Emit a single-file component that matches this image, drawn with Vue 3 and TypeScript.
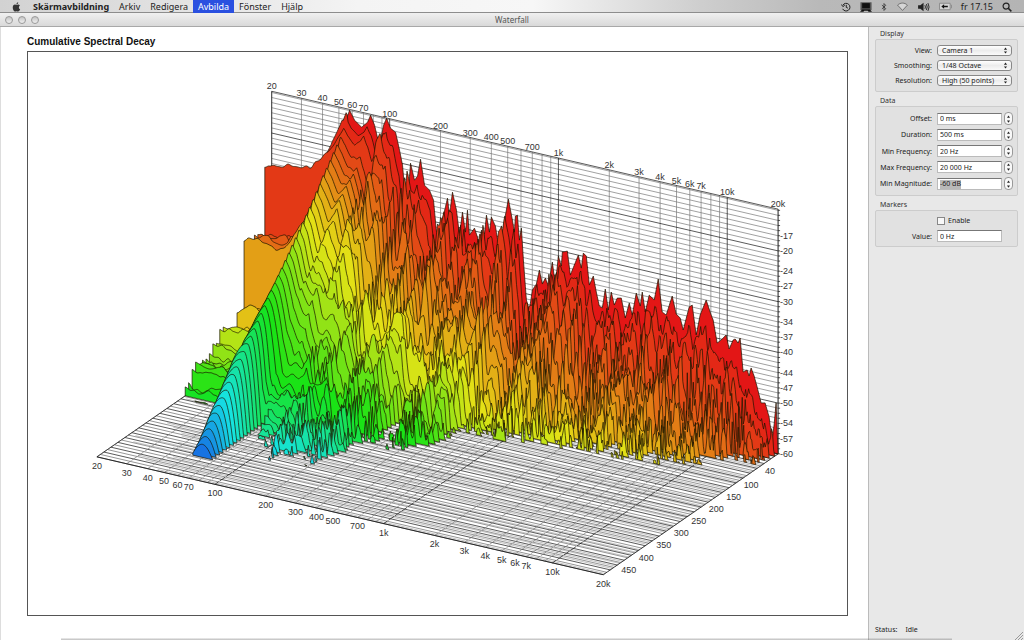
<script setup lang="ts">
import { ref } from 'vue'

type Point = [number, number]

const menus = ['Arkiv', 'Redigera', 'Avbilda', 'Fönster', 'Hjälp']
const activeMenu = ref('Avbilda')

const selects = [
  { id: 'view', label: 'View:', value: 'Camera 1', options: ['Camera 1', 'Camera 2'] },
  { id: 'smoothing', label: 'Smoothing:', value: '1/48 Octave', options: ['1/48 Octave', '1/24 Octave'] },
  { id: 'resolution', label: 'Resolution:', value: 'High (50 points)', options: ['High (50 points)', 'Low (20 points)'] },
]
const fields = ref([
  { id: 'offset', label: 'Offset:', value: '0 ms', marked: false },
  { id: 'duration', label: 'Duration:', value: '500 ms', marked: false },
  { id: 'minf', label: 'Min Frequency:', value: '20 Hz', marked: false },
  { id: 'maxf', label: 'Max Frequency:', value: '20 000 Hz', marked: false },
  { id: 'minm', label: 'Min Magnitude:', value: '-60 dB', marked: true },
])
const markerValue = ref('0 Hz')
const markersOn = ref(false)

function step(index: number, by: number) {
  const f = fields.value[index]
  const m = f.value.replace(/ (?=\d)/g, '').match(/^(-?\d+) (.*)$/)
  if (m) f.value = `${Number(m[1]) + by} ${m[2]}`
}

/* ---- projection: f and t run 0..1, h is height above the floor ---- */
const px = (f: number, t: number) => 272 + 507 * f - 175 * t
const py = (f: number, t: number) => 336 + 118 * f + 121 * t
const DB = 5.08
const TOP = 245
const fOf = (hz: number) => Math.log10(hz / 20) / 3
const clamp = (v: number) => Math.min(1, Math.max(0, v))

function lerpTable(table: Point[], x: number): number {
  if (x <= table[0][0]) return table[0][1]
  for (let i = 1; i < table.length; i++) {
    if (x <= table[i][0]) {
      const [x0, y0] = table[i - 1]
      const [x1, y1] = table[i]
      return y0 + ((y1 - y0) * (x - x0)) / (x1 - x0)
    }
  }
  return table[table.length - 1][1]
}

/* top edge of the spectrum at t = 0 */
const spectrum: Point[] = [
  [272, 182], [300, 180], [325, 165], [331, 150], [335, 142], [341, 122], [344, 112], [347, 118], [350, 110], [355, 120], [362, 127],
  [368, 122], [371, 115], [375, 125], [379, 142], [381, 140], [384, 125], [387, 118], [391, 128], [396, 132],
  [400, 150], [403, 165], [406, 200], [408, 202], [411, 163], [415, 180], [418, 176], [421, 159], [425, 185],
  [430, 190], [434, 200], [437, 232], [440, 235], [444, 215], [448, 198], [450, 215], [453, 192], [457, 210],
  [460, 235], [463, 212], [466, 232], [468, 210], [470, 235], [475, 228], [480, 243], [482, 230], [484, 244],
  [487, 215], [490, 232], [492, 217], [496, 226], [499, 245], [503, 235], [506, 215], [509, 199], [513, 220],
  [515, 232], [516, 216], [518, 215], [520, 240], [522, 228], [524, 260], [527, 300], [530, 310], [533, 290],
  [537, 284], [540, 270], [543, 284], [546, 278], [549, 286], [553, 262], [556, 285], [559, 256], [562, 266],
  [563, 252], [568, 251], [571, 275], [575, 265], [579, 255], [582, 268], [584, 253], [587, 256], [590, 285],
  [594, 276], [597, 292], [600, 306], [603, 308], [606, 289], [609, 310], [612, 292], [615, 305], [618, 298],
  [622, 298], [626, 318], [630, 303], [633, 315], [637, 293], [641, 306], [643, 292], [646, 312], [650, 295],
  [655, 300], [659, 279], [663, 312], [667, 315], [673, 296], [677, 314], [681, 318], [684, 330], [690, 307],
  [693, 305], [697, 335], [701, 315], [707, 300], [712, 315], [714, 320], [718, 343], [722, 340], [727, 335],
  [730, 349], [734, 340], [736, 339], [739, 343], [741, 338], [744, 372], [748, 370], [750, 376], [752, 368],
  [755, 376], [758, 387], [762, 403], [766, 403], [770, 417], [773, 440], [775, 425], [777, 403], [779, 455],
]
/* time at which each frequency band falls through the floor */
const decay: Point[] = [
  [0, 0.9], [0.157, 0.9], [0.165, 0.85], [0.18, 0.64], [0.2, 0.67], [0.234, 0.7], [0.267, 0.73], [0.3, 0.66],
  [0.335, 0.71], [0.36, 0.58], [0.39, 0.44], [0.43, 0.52], [0.46, 0.46], [0.5, 0.3], [0.54, 0.3], [0.57, 0.34],
  [0.6, 0.29], [0.643, 0.25], [0.718, 0.26], [0.803, 0.24], [0.896, 0.17], [0.95, 0.11], [1, 0.05],
]
/* height along the 20 Hz edge over time */
const lowEdge: Point[] = [
  [0, 150], [0.02, 160], [0.04, 178], [0.05, 150], [0.06, 108], [0.098, 117], [0.11, 100], [0.14, 100], [0.157, 124],
  [0.165, 70], [0.176, 50], [0.196, 55], [0.216, 36], [0.25, 30], [0.274, 44], [0.294, 48], [0.31, 30], [0.333, 34],
  [0.35, 22], [0.39, 20], [0.431, 24], [0.451, 27], [0.46, 12], [0.5, 6], [0.515, -10], [0.6, -60], [1, -90],
]

function hash(i: number, j: number): number {
  const s = Math.sin(i * 127.1 + j * 311.7) * 43758.5453
  return s - Math.floor(s)
}
function noise(u: number, v: number): number {
  const i = Math.floor(u)
  const j = Math.floor(v)
  const a = u - i
  const b = v - j
  const sa = a * a * (3 - 2 * a)
  const sb = b * b * (3 - 2 * b)
  const n0 = hash(i, j) + (hash(i + 1, j) - hash(i, j)) * sa
  const n1 = hash(i, j + 1) + (hash(i + 1, j + 1) - hash(i, j + 1)) * sa
  return (n0 + (n1 - n0) * sb) * 2 - 1
}

/* rounded bass resonance that narrows as it dies away */
function dome(f: number, t: number): number {
  const spread = f < 0.157 ? 0.14 * Math.max(0, 0.86 - t) : 0.3 * Math.max(0, 0.52 - t)
  const d = (f - 0.157) / (0.02 + spread)
  return 243 * Math.max(0, 1 - t / 0.9) * (1 - d * d)
}

function height(f: number, t: number): number {
  const x = 272 + 507 * f
  const h0 = py(f, 0) - lerpTable(spectrum, x)
  const late = clamp((t - 0.3) / 0.3)
  if (f < 0.157) {
    const ridge = 243 * (1 - t / 0.9)
    const edge = lerpTable(lowEdge, t)
    const s = Math.pow(clamp((f - 0.055) / 0.102), 2)
    const wob = (noise(f * 40, t * 40) * 5 + noise(f * 110, t * 50) * 3) * (1 - s)
    const base = edge + (ridge - edge) * s
    if (t < 0.02) return Math.min(h0, base + 14)
    const body = base * (1 - late) + dome(f, t) * late * (f > 0.09 || t > 0.55 ? 1 : clamp((f - 0.06) / 0.03))
    return Math.max(edge, body) + wob
  }
  const bend = 1 + 0.75 * clamp((f - 0.19) / 0.08) - 0.25 * clamp((f - 0.34) / 0.1)
  const fall = 1 - t / lerpTable(decay, f)
  const drop = fall > 0 ? Math.pow(fall, bend) : fall
  const u = 507 * f * (0.05 + 0.17 * f)
  const rough = clamp((f - 0.165) / 0.05) * clamp(t / 0.06)
  const peaks = 1 - 2.4 * Math.pow(Math.abs(noise(u, t * 14)), 0.85)
  const n = peaks * 0.85 + noise(u * 1.9 + 40, t * 20) * 0.4 - 0.1
  const amp = (f < 0.25 ? 20 : 27) * rough * (fall > 0 ? 1 : 0.8)
  const smooth = 238 - 45 * clamp((f - 0.16) / 0.1) - 48 * clamp((f - 0.24) / 0.12) - 55 * clamp((f - 0.36) / 0.4)
  const blend = Math.min(0.5, t * 4) * (f < 0.24 ? 0.4 : 1) * (f > 0.85 ? Math.max(0, (1 - f) / 0.15) : 1)
  let h = (h0 * (1 - blend) + smooth * blend) * drop + n * amp
  if (f < 0.26 && t > 0.3) {
    const w = clamp((0.26 - f) / 0.05) * late
    const rest = t < 0.56 ? h * 0.55 : f < 0.19 ? -9 : h * 0.7 - 6
    h = h * (1 - w) + Math.max(dome(f, t), rest) * w
  }
  return h
}

const COUNT = 50
const DIED = 0.86
const slices = Array.from({ length: Math.floor(COUNT * DIED) + 1 }, (_, k) => {
  const t = (k / COUNT) * 0.99
  let d = ''
  let run: string[] = []
  let start = 0
  const close = (f: number) => {
    if (run.length > 1) {
      d += `M${px(start, t).toFixed(1)} ${py(start, t).toFixed(1)}L${run.join('L')}L${px(f, t).toFixed(1)} ${py(f, t).toFixed(1)}Z`
    }
    run = []
  }
  for (let i = 0; i <= 507; i++) {
    const f = i / 507
    const h = height(f, t)
    if (h > 0) {
      if (!run.length) start = f
      run.push(`${px(f, t).toFixed(1)} ${(py(f, t) - h).toFixed(1)}`)
    } else close(f)
  }
  close(1)
  return { d, fill: `hsl(${Math.round(t * 250)}, 82%, 49%)` }
})

const line = (x1: number, y1: number, x2: number, y2: number) =>
  `M${x1.toFixed(1)} ${y1.toFixed(1)}L${x2.toFixed(1)} ${y2.toFixed(1)}`

const freqs: number[] = []
for (const d of [10, 100, 1000, 10000]) {
  for (let m = 1; m < 10; m++) {
    const hz = d * m
    if (hz >= 20 && hz <= 20000) freqs.push(hz)
  }
}
const isDecade = (hz: number) => [100, 1000, 10000].includes(hz)
const wallLine = (hz: number) => {
  const f = fOf(hz)
  return line(px(f, 0), py(f, 0), px(f, 0), py(f, 0) - TOP)
}
const floorLine = (hz: number) => {
  const f = fOf(hz)
  return line(px(f, 0), py(f, 0), px(f, 1), py(f, 1))
}
const minorFreq = freqs.filter((h) => !isDecade(h))
const majorFreq = freqs.filter(isDecade)
const wallMinor = minorFreq.map(wallLine).join('')
const wallMajor = majorFreq.map(wallLine).join('')
const floorMinor = minorFreq.map(floorLine).join('')
const floorMajor = majorFreq.map(floorLine).join('')

let dbMinor = ''
let dbMajor = ''
let ticks = ''
for (let db = 0; db <= 48; db++) {
  const y = db * DB
  const seg = line(272, 336 - y, 779, 454 - y)
  if (db % 10 === 0) dbMajor += seg
  else dbMinor += seg
  ticks += line(779, 454 - y, 781, 454 - y)
}
let timeThin = ''
let timeBold = ''
let timeGrey = ''
for (let k = 0; k <= 50; k++) {
  const t = k / 50
  const seg = line(px(0, t), py(0, t), px(1, t), py(1, t))
  if (k % 2 === 0) timeBold += seg
  else timeThin += seg
  if (k < 50 && k % 5 !== 3) {
    const g = t + 0.006 + 0.008 * hash(k, 9)
    const f0 = 0.12 * hash(k, 4)
    timeGrey += line(px(f0, g), py(f0, g), px(1, g), py(1, g))
  }
}
const outline = `M97 457L272 336V91L779 209V454L604 575Z`

const labelled = [20, 30, 40, 50, 60, 70, 100, 200, 300, 400, 500, 700, 1000, 2000, 3000, 4000, 5000, 6000, 7000, 10000, 20000]
const freqLabels = labelled.map((hz) => ({
  text: hz >= 1000 ? `${hz / 1000}k` : `${hz}`,
  x: px(fOf(hz), 0),
  top: py(fOf(hz), 0) - TOP - 2,
  bx: px(fOf(hz), 1),
  by: py(fOf(hz), 1) + 12,
}))
const dbLabels = [17, 20, 24, 27, 30, 34, 37, 40, 44, 47, 50, 54, 57, 60].map((v) => ({
  text: `-${v}`,
  y: 457 - (60 - v) * DB,
}))
const timeLabels = [40, 100, 150, 200, 250, 300, 350, 400, 450].map((ms) => ({
  text: `${ms}`,
  x: (ms < 100 ? 785 : 787) - 175 * (ms / 500),
  y: 464 + 121 * (ms / 500),
}))
</script>

<template>
  <div class="desktop">
    <header class="menubar">
      <svg class="apple" viewBox="0 0 10 12" aria-hidden="true">
        <path d="M7 .3C5.700.5 4.900 1.500 5 2.700 6.300 2.700 7.100 1.500 7 .3ZM5.100 3.400C4.500 3.400 4 3 3.200 3 1.600 3 .5 4.400.5 6.500.5 8.900 1.900 11.500 3.200 11.500 3.900 11.500 4.300 11.100 5.100 11.100S6.300 11.500 6.900 11.500C8 11.500 9 9.900 9.400 8.700 8.300 8.200 7.800 7.300 7.900 6.200 7.900 5.300 8.400 4.600 9.100 4.100 8.600 3.400 7.800 3 7 3 6.200 3 5.700 3.400 5.100 3.400Z" />
      </svg>
      <nav class="menus">
        <button class="menu app">Skärmavbildning</button>
        <button
          v-for="m in menus"
          :key="m"
          class="menu"
          :class="{ active: m === activeMenu }"
          @click="activeMenu = m"
        >{{ m }}</button>
      </nav>
      <div class="extras">
        <svg class="i10" viewBox="0 0 12 12" aria-hidden="true">
          <path d="M2.200 3.800A4.600 4.600 0 1 1 2 8.200M.5 3L2.300 5.600 4.600 3.700M6.300 3.400V6.400L8.300 7.400" fill="none" stroke="#222" stroke-width="1.200" />
        </svg>
        <svg class="i12" viewBox="0 0 14 11" aria-hidden="true">
          <path d="M.5 0H13.500V9H.5Z" fill="#555" /><path d="M2.500 1H11.500V7H2.500Z" fill="#111" /><path d="M0 11L2.500 8.500H11.500L14 11H10L9 10H5L4 11Z" fill="#111" />
        </svg>
        <svg class="i6" viewBox="0 0 8 12" aria-hidden="true">
          <path d="M1.200 3.400L6.300 8.200 4 10.600V1.400L6.300 3.800 1.200 8.600" fill="none" stroke="#333" stroke-width="1.100" />
        </svg>
        <svg class="i13" viewBox="0 0 14 11" aria-hidden="true">
          <path d="M1 3.800C4.500.5 9.500.5 13 3.800L7 10.300Z" fill="#d6d6d6" stroke="#555" stroke-width=".9" />
        </svg>
        <svg class="i12" viewBox="0 0 13 11" aria-hidden="true">
          <path d="M0 3.700H2.500L6 .8V10.200L2.500 7.300H0Z" fill="#222" />
          <path d="M7.500 3.500Q8.700 5.500 7.500 7.500M9.100 2.300Q11 5.500 9.100 8.700M10.800 1.200Q13.400 5.500 10.800 9.800" fill="none" stroke="#222" />
        </svg>
        <svg class="i13" viewBox="0 0 14 9" aria-hidden="true">
          <path d="M.5 1H12V8H.5ZM12.500 3H13.500V6H12.500" fill="#d4d4d4" stroke="#888" /><path d="M2.500 4.500L5.500 2.200V3.700H9.500V5.300H5.500V6.800Z" fill="#111" />
        </svg>
        <span class="clock">fr 17.15</span>
        <svg class="i10" viewBox="0 0 11 11" aria-hidden="true">
          <circle cx="4.500" cy="4.500" r="3.300" fill="none" stroke="#222" stroke-width="1.300" /><path d="M7 7L10.300 10.300" stroke="#222" stroke-width="1.600" />
        </svg>
      </div>
    </header>

    <div class="titlebar">
      <div class="lights">
        <button class="light" aria-label="Close"></button>
        <button class="light" aria-label="Minimize"></button>
        <button class="light" aria-label="Zoom"></button>
      </div>
      <span class="title">Waterfall</span>
    </div>

    <div class="window">
      <main class="main">
        <h1 class="heading">Cumulative Spectral Decay</h1>
        <div class="frame">
          <svg class="plot" viewBox="28 52 820 563" role="img" aria-label="Cumulative spectral decay plot">
            <path class="ln grey" :d="dbMinor" />
            <path class="ln grey" :d="wallMinor" />
            <path class="ln dark" :d="dbMajor" />
            <path class="ln dark" :d="wallMajor" />
            <path class="ln pale" :d="timeGrey" />
            <path class="ln mid" :d="timeThin" />
            <path class="ln dark" :d="timeBold" />
            <path class="ln grey dashed" :d="floorMinor" />
            <path class="ln dark dashed" :d="floorMajor" />
            <path class="ln dark" :d="outline" />
            <path class="ln dark" :d="ticks" />
            <path v-for="(s, i) in slices" :key="i" class="slice" :d="s.d" :fill="s.fill" />
            <g class="lbl">
              <text v-for="l in freqLabels" :key="'t' + l.text" :x="l.x" :y="l.top" text-anchor="middle">{{ l.text }}</text>
              <text v-for="l in freqLabels" :key="'b' + l.text" :x="l.bx" :y="l.by" text-anchor="middle">{{ l.text }}</text>
              <text v-for="l in dbLabels" :key="l.text" x="781" :y="l.y">{{ l.text }}</text>
              <text v-for="l in timeLabels" :key="'m' + l.text" :x="l.x" :y="l.y" text-anchor="middle">{{ l.text }}</text>
            </g>
          </svg>
        </div>
      </main>

      <aside class="side">
        <section class="group">
          <h2 class="gtitle">Display</h2>
          <div class="box display">
            <div v-for="s in selects" :key="s.id" class="row">
              <label :for="s.id">{{ s.label }}</label>
              <span class="pop">
                <select :id="s.id">
                  <option v-for="o in s.options" :key="o" :selected="o === s.value">{{ o }}</option>
                </select>
                <svg class="arrows" viewBox="0 0 5 8" aria-hidden="true"><path d="M2.500.5L4.300 3H.7ZM2.500 7.500L.7 5H4.300Z" /></svg>
              </span>
            </div>
          </div>
        </section>

        <section class="group">
          <h2 class="gtitle">Data</h2>
          <div class="box data">
            <div v-for="(f, i) in fields" :key="f.id" class="row">
              <label :for="f.id">{{ f.label }}</label>
              <span class="edit">
                <span class="cell">
                  <span v-if="f.marked" class="mark" aria-hidden="true">{{ f.value }}</span>
                  <input :id="f.id" v-model="f.value" type="text" />
                </span>
                <span class="stepper">
                  <button :aria-label="f.label + ' up'" @click="step(i, 1)"><svg viewBox="0 0 4 3"><path d="M2 0L4 3H0Z" /></svg></button>
                  <button :aria-label="f.label + ' down'" @click="step(i, -1)"><svg viewBox="0 0 4 3"><path d="M2 3L4 0H0Z" /></svg></button>
                </span>
              </span>
            </div>
          </div>
        </section>

        <section class="group">
          <h2 class="gtitle">Markers</h2>
          <div class="box markers">
            <div class="row">
              <span></span>
              <label class="check"><input v-model="markersOn" type="checkbox" />Enable</label>
            </div>
            <div class="row">
              <label for="mv">Value:</label>
              <span class="edit"><span class="cell"><input id="mv" v-model="markerValue" type="text" /></span><span class="gap"></span></span>
            </div>
          </div>
        </section>

        <footer class="status">
          <span>Status:</span><span>Idle</span>
          <svg class="grip" viewBox="0 0 8 8" aria-hidden="true"><path d="M0 8L8 0M3 8L8 3M6 8L8 6" stroke="#999" fill="none" /></svg>
        </footer>
      </aside>
    </div>
    <div class="dockshade"></div>
  </div>
</template>

<style>
html,
body {
  margin: 0;
  overflow: hidden;
}
</style>

<style scoped>
* {
  box-sizing: border-box;
}
.desktop {
  display: flex;
  flex-direction: column;
  height: 100vh;
  position: relative;
  background: #fff;
  color: #222;
  font-family: 'Noto Sans', 'Open Sans', sans-serif;
  font-size: 7px;
}
button,
input,
select {
  font: inherit;
  color: inherit;
  margin: 0;
  padding: 0;
  border: 0;
  background: none;
  appearance: none;
  outline: none;
}
svg {
  display: block;
}
.menubar {
  flex: none;
  display: flex;
  align-items: center;
  height: 13px;
  padding: 0 12px;
  font-size: 9px;
  background: linear-gradient(90deg, #d2d2d2 0, #e3e3e3 18%, #f4f4f4 35%, #f7f7f7 52%, #cfcfcf 68%, #b9b9b9 80%, #b4b4b4 100%);
  box-shadow: inset 0 -1px #8d8d8d;
}
.apple {
  width: 9px;
  height: 10px;
  fill: #333;
}
.menus {
  display: flex;
  flex: 1;
  height: 13px;
  margin-left: 7px;
}
.menu {
  height: 13px;
  padding: 0 5px;
  line-height: 12px;
}
.menu.app {
  font-weight: 700;
}
.menu.active {
  color: #fff;
  background: #2a50e0;
}
.extras {
  display: flex;
  align-items: center;
  gap: 9px;
}
.clock {
  font-size: 9px;
  line-height: 12px;
}
.i6 {
  width: 6px;
  height: 10px;
}
.i10 {
  width: 10px;
  height: 10px;
}
.i12 {
  width: 12px;
  height: 10px;
}
.i13 {
  width: 13px;
  height: 9px;
}
.titlebar {
  flex: none;
  display: grid;
  grid-template-columns: 1fr auto 1fr;
  align-items: center;
  height: 14px;
  background: linear-gradient(#f0f0f0, #d9d9d9);
  border-bottom: 1px solid #a8a8a8;
}
.lights {
  display: flex;
  gap: 5px;
  padding-left: 5px;
}
.light {
  width: 8px;
  height: 8px;
  border: 1px solid #999;
  border-radius: 50%;
  background: linear-gradient(#c4c4c4, #f0f0f0);
}
.title {
  font-size: 8px;
  line-height: 12px;
  color: #555;
}
.window {
  flex: 1;
  display: flex;
  min-height: 0;
}
.main {
  flex: 1;
  display: flex;
  flex-direction: column;
  min-width: 0;
  padding: 9px 20px 24px 26px;
  border-left: 1px solid #ddd;
}
.heading {
  margin: 0 0 3px;
  font: 700 10px/12px 'Liberation Sans', Arial, sans-serif;
  color: #111;
}
.frame {
  flex: 1;
  min-height: 0;
  border: 1px solid #555;
}
.plot {
  width: 100%;
  height: 100%;
}
.ln {
  fill: none;
  stroke-width: 0.7;
}
.grey {
  stroke: #777;
}
.pale {
  stroke: #aaa;
}
.mid {
  stroke: #666;
}
.dark {
  stroke: #111;
}
.dashed {
  stroke-dasharray: 7 1;
}
.slice {
  stroke: #1a1400;
  stroke-width: 0.7;
  stroke-linejoin: round;
}
.lbl {
  font: 9px 'Liberation Sans', Arial, sans-serif;
  fill: #333;
}
.side {
  flex: none;
  display: flex;
  flex-direction: column;
  width: 156px;
  padding: 2px 6px 4px;
  background: #e8e8e8;
  border-left: 1px solid #bbb;
}
.group {
  margin-bottom: 4px;
}
.gtitle {
  margin: 0 0 0 5px;
  font-size: 7px;
  font-weight: 400;
  line-height: 10px;
  color: #333;
}
.box {
  display: flex;
  flex-direction: column;
  justify-content: space-between;
  padding: 5px;
  border: 1px solid #ccc;
  border-radius: 2px;
  background: #e1e1e1;
}
.display {
  height: 53px;
}
.data {
  height: 90px;
  padding: 5px 4px 5px 5px;
}
.markers {
  height: 37px;
  padding: 4px 4px 4px 5px;
}
.row {
  display: grid;
  grid-template-columns: 51px 1fr;
  column-gap: 5px;
  align-items: center;
  line-height: 11px;
}
.data .row {
  height: 13px;
}
.row > label:first-child {
  display: flex;
  justify-content: flex-end;
  white-space: nowrap;
}
.pop {
  position: relative;
  display: flex;
}
.pop select {
  width: 100%;
  height: 11px;
  padding: 0 4px;
  line-height: 9px;
  border: 1px solid #888;
  border-radius: 3px;
  background: linear-gradient(#fff, #ececec 50%, #fafafa);
}
.arrows {
  position: absolute;
  right: 4px;
  top: 2px;
  width: 5px;
  height: 7px;
  fill: #222;
}
.edit {
  display: flex;
  align-items: center;
  gap: 2px;
}
.cell {
  position: relative;
  flex: 1;
  display: flex;
  min-width: 0;
  background: #fff;
}
.cell input {
  position: relative;
  width: 100%;
  height: 12px;
  padding: 0 2px;
  line-height: 10px;
  border: 1px solid #bbb;
  border-top-color: #777;
}
.mark {
  position: absolute;
  left: 3px;
  top: 2px;
  line-height: 9px;
  color: transparent;
  background: #b8b8b8;
}
.gap {
  width: 9px;
}
.stepper {
  display: flex;
  flex-direction: column;
  justify-content: center;
  gap: 2px;
  width: 9px;
  height: 13px;
  border: 1px solid #999;
  border-radius: 4px;
  background: #f8f8f8;
}
.stepper button {
  display: flex;
  justify-content: center;
}
.stepper svg {
  width: 3px;
  height: 3px;
  fill: #222;
}
.check {
  display: flex;
  align-items: center;
  gap: 3px;
}
.check input {
  width: 8px;
  height: 8px;
  border: 1px solid #888;
  background: #f8f8f8;
}
.check input:checked {
  background: #555;
}
.status {
  display: flex;
  align-items: center;
  gap: 8px;
  margin-top: auto;
  line-height: 12px;
  position: relative;
}
.grip {
  position: absolute;
  right: -5px;
  bottom: -4px;
  width: 8px;
  height: 8px;
}
.dockshade {
  position: absolute;
  left: 6%;
  right: 7%;
  bottom: 0;
  height: 2px;
  background: linear-gradient(rgba(120, 120, 120, 0.1), rgba(120, 120, 120, 0.5));
}
</style>
